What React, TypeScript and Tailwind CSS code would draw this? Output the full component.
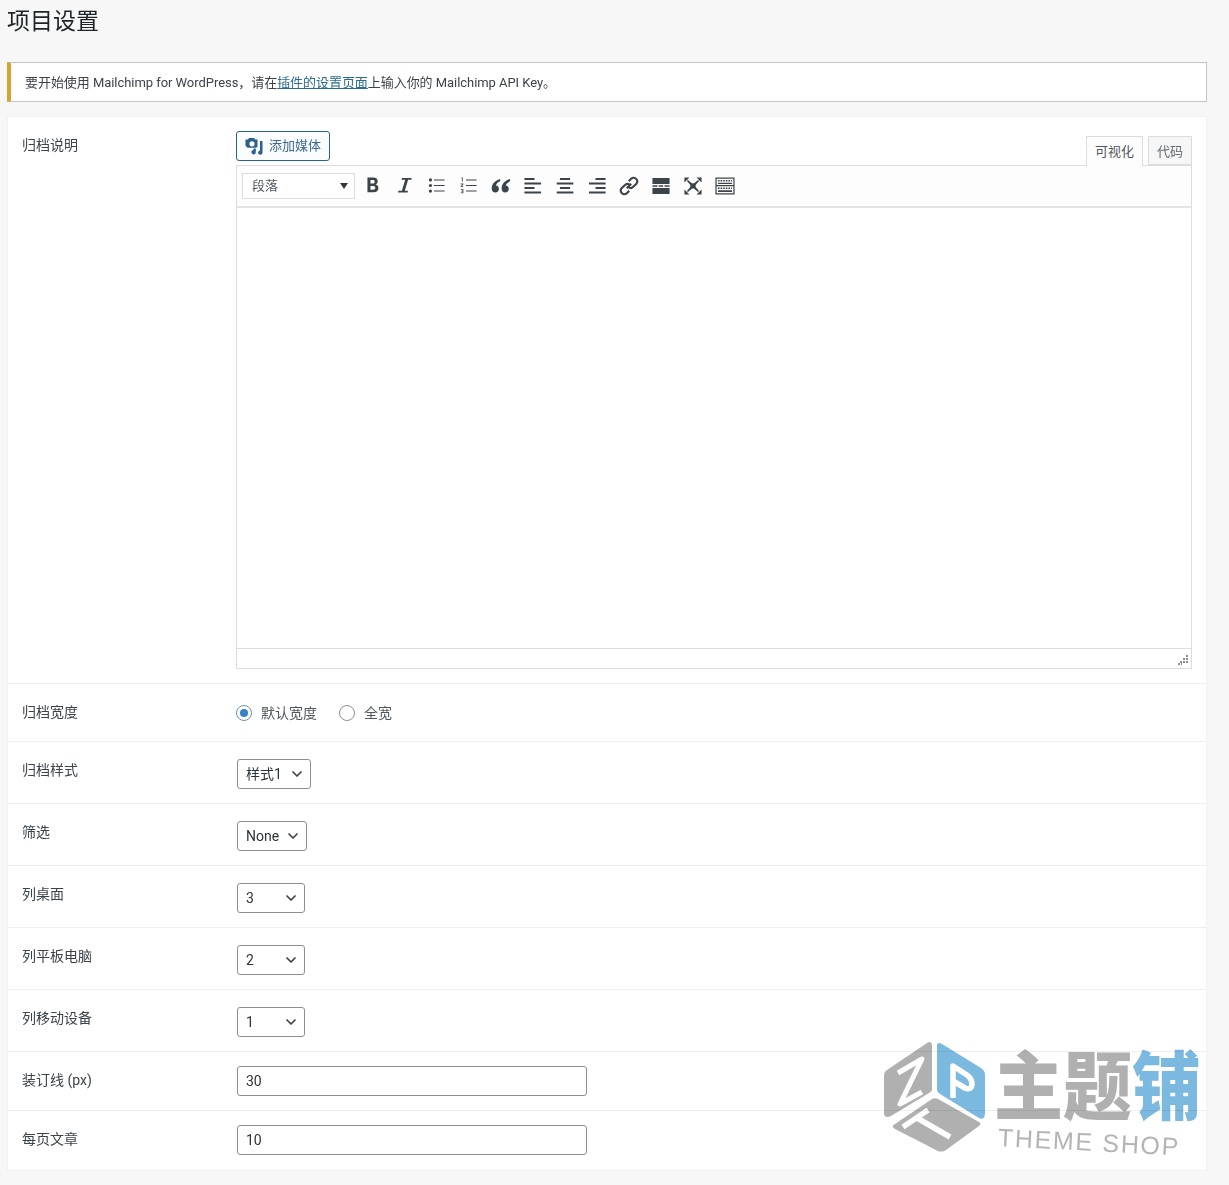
import { ChevronDown } from "lucide-react";
import type { ReactNode } from "react";

const toolbarIcons: ReactNode[] = [
  // bold
  <path key="b" fillRule="evenodd" d="M4.500 1.500h5.700c2.900 0 4.500 1.400 4.500 3.700 0 1.500-.8 2.700-2.100 3.200 1.800.4 2.800 1.800 2.800 3.500 0 2.700-1.900 4.300-5 4.300H4.500V1.500zm3 2.500v3.500h2.200c1.300 0 2-.6 2-1.800 0-1.100-.7-1.700-2-1.700H7.500zm0 6v3.700h2.500c1.500 0 2.300-.6 2.300-1.900 0-1.200-.9-1.800-2.400-1.800H7.500z" />,
  // italic
  <path key="i" d="M7 2h9.500v1.800h-3.400L9.800 14.700h3.200l-.5 1.800H3l.5-1.800h3.400L10.200 3.800H6.500z" />,
  // bullet list
  <g key="ul"><circle cx="3.500" cy="4" r="1.600" /><circle cx="3.500" cy="9.500" r="1.600" /><circle cx="3.500" cy="15" r="1.600" /><path d="M7 3.500h10.500v1H7zM7 9h10.500v1H7zM7 14.500h10.500v1H7z" /></g>,
  // numbered list
  <g key="ol"><path d="M7 3.500h10.500v1H7zM7 9h10.500v1H7zM7 14.500h10.500v1H7z" /><path d="M2.500 1.500h1.300v4H3V2.500h-.5zM1.800 7.500h2.600v.9L3 10h1.400v.8H1.800V10l1.500-1.700H1.800zM1.800 13h2.600v4.200H1.800v-.8h1.800v-.9H2.400v-.7h1.200v-1H1.800z" /></g>,
  // quote
  <path key="q" d="M9.200 3C5 4.200.8 7.300.8 12.400c0 2.600 1.500 4.100 3.600 4.100 2 0 3.500-1.500 3.500-3.500 0-1.900-1.200-3.200-3-3.400.4-1.700 2.100-3.300 4.300-4.200zm9.800 0c-4.200 1.200-8.400 4.300-8.400 9.400 0 2.600 1.500 4.100 3.600 4.100 2 0 3.500-1.500 3.500-3.500 0-1.900-1.200-3.200-3-3.400.4-1.700 2.100-3.300 4.300-4.200z" />,
  // align left
  <path key="al" d="M1.500 2h10v2h-10zM1.500 6.500h16.500v2H1.500zM1.500 11h10v2h-10zM1.500 15.500h16.500v2H1.500z" />,
  // align center
  <path key="ac" d="M5 2h10v2H5zM1.800 6.500h16.500v2H1.800zM5 11h10v2H5zM1.800 15.500h16.500v2H1.800z" />,
  // align right
  <path key="ar" d="M8.500 2h10v2h-10zM2 6.500h16.500v2H2zM8.500 11h10v2h-10zM2 15.500h16.500v2H2z" />,
  // link
  <g key="l" fill="none" stroke="currentColor" strokeWidth="2.100"><path d="M7.800 12.200l4.400-4.400" /><path d="M9.800 5.200l2.300-2.300c1.500-1.500 3.700-1.500 5 0s1.500 3.500 0 5l-2.900 2.900c-1.400 1.400-3.500 1.400-4.800.2" /><path d="M10.200 14.800l-2.300 2.300c-1.500 1.500-3.700 1.500-5 0s-1.500-3.500 0-5l2.900-2.900c1.400-1.400 3.500-1.400 4.800-.2" /></g>,
  // read more
  <path key="m" d="M1.500 2h17v6h-17zM1.500 9.300h5v1.400h-5zM7.800 9.300h4.400v1.400H7.800zM13.500 9.300h5v1.400h-5zM1.500 12h17v6h-17z" />,
  // fullscreen
  <g key="f"><path d="M1.500 1.500h5L1.500 6.500zM18.500 1.500v5l-5-5zM1.500 18.500v-5l5 5zM18.500 18.500h-5l5-5z" /><path d="M5 4l3.500 3c1 .6 2 .6 3 0L15 4l1 1-3 3.500c-.6 1-.6 2 0 3l3 3.500-1 1-3.500-3c-1-.6-2-.6-3 0L5 16l-1-1 3-3.500c.6-1 .6-2 0-3L4 5z" /></g>,
  // toolbar toggle
  <path key="k" fillRule="evenodd" d="M.5 1.500h19v17H.5zM1.700 2.700v6.300h16.600V2.700zM1.700 10.200v7.100h16.600v-7.100zM3 4h1.600v1.600H3zM5.600 4h1.600v1.600H5.600zM8.200 4h1.600v1.600H8.200zM10.800 4h1.600v1.600h-1.600zM13.400 4H15v1.600h-1.600zM16 4h1v1.600h-1zM3 6.700h14v1.200H3zM3 11.500h1.600v1.600H3zM5.600 11.500h1.600v1.600H5.600zM8.200 11.500h1.600v1.600H8.200zM10.800 11.500h1.600v1.600h-1.600zM13.400 11.500H15v1.600h-1.600zM16 11.500h1v1.600h-1zM3 14.200h14v1.800H3z" />,
];

function Row({ label, className, children }: { label: string; className: string; children: ReactNode }) {
  return (
    <div className={`flex border-b border-[#eeeeee] pl-[14px] ${className}`}>
      <div className="w-[215px] shrink-0 text-[14px] leading-[20px] text-[#3c434a]">{label}</div>
      <div className="min-w-0 grow">{children}</div>
    </div>
  );
}

function FakeSelect({ value, width }: { value: string; width: string }) {
  return (
    <div className={`-mt-px flex h-[30px] items-center justify-between rounded-[3px] border border-[#8c8f94] bg-white pl-2 pr-[5px] text-[14px] text-[#2c3338] ${width}`}>
      <span>{value}</span>
      <ChevronDown className="h-4 w-4 text-[#3c434a]" strokeWidth={2.6} />
    </div>
  );
}

function TextBox({ value }: { value: string }) {
  return (
    <input
      readOnly
      value={value}
      className="-mt-[4px] block h-[30px] w-[350px] rounded-[3px] border border-[#8c8f94] bg-white px-2 text-[14px] text-[#2c3338]"
    />
  );
}

function Radio({ label, checked }: { label: string; checked?: boolean }) {
  return (
    <div className="flex items-center gap-[9px]">
      <span className={`flex h-4 w-4 items-center justify-center rounded-full border ${checked ? "border-[#6f8fb0]" : "border-[#8c8f94]"}`}>
        {checked && <span className="h-2 w-2 rounded-full bg-[#3582c4]" />}
      </span>
      <span className="text-[14px] leading-[20px] text-[#50575e]">{label}</span>
    </div>
  );
}

function Watermark() {
  return (
    <div className="pointer-events-none absolute left-[880px] top-[1036px] h-[125px] w-[325px] mix-blend-multiply">
      <svg viewBox="0 0 110 120" className="absolute left-0 top-0 h-[120px] w-[110px]">
        <path d="M52 10v43c0 2-1 3-3 4L11 80c-4 2-7 1-7-3V40c0-3 1-5 3-6L47 7c3-2 5-1 5 3z" fill="#b0b0b0" />
        <path d="M57 10c0-3 2-4 5-2l39 24c3 2 4 4 4 7v38c0 5-2 7-6 5L60 58c-2-1-3-3-3-5z" fill="#7cb9e0" />
        <path d="M52 63c2-1 4-1 6 0l41 23c2 1 2 3 0 4L66 114c-3 2-7 2-10 0L15 93c-3-2-3-4 0-5z" fill="#b0b0b0" />
        <path d="M18 37L42 23 20 68 42 56" fill="none" stroke="#ffffff" strokeWidth="5" strokeLinejoin="round" />
        <path d="M73 62V30l14 9c4 3 5 6 5 9 0 4-3 6-7 4l-12-7" fill="none" stroke="#ffffff" strokeWidth="5.500" strokeLinejoin="round" />
        <path d="M23 91l25-17M37 82l33 19" fill="none" stroke="#ffffff" strokeWidth="5.500" />
      </svg>
      <div className="absolute left-[114px] top-[6px] flex h-[74px] origin-top scale-y-[1.08] font-['Noto_Sans_CJK_SC',sans-serif] text-[69px] font-black leading-[74px]">
        <span className="text-[#b0b0b0]">主题</span>
        <span className="text-[#7cb9e0]">铺</span>
      </div>
      <div className="absolute left-[118px] top-[88px] origin-left rotate-[3deg] whitespace-nowrap font-['Liberation_Sans',sans-serif] text-[25px] leading-[26px] tracking-[1.700px] text-[#b4b4b4]">
        THEME SHOP
      </div>
    </div>
  );
}

export default function App() {
  return (
    <div className="relative h-[1185px] overflow-hidden bg-[#f7f7f7] pl-[7px] pr-[22px] font-['Roboto','Noto_Sans_CJK_SC',sans-serif]">
      <h1 className="h-[62px] pt-[6px] text-[23px] leading-[32px] text-[#1d2327]">项目设置</h1>

      <div className="flex h-10 items-center border border-l-4 border-[#c3c4c7] border-l-[#d3a52b] bg-white pl-[14px] pt-px text-[13px] tracking-[-0.05px] text-[#3c434a]">
        <span>
          要开始使用 Mailchimp for WordPress，请在<a href="#" className="text-[#2a6a94] underline">插件的设置页面</a>上输入你的 Mailchimp API Key。
        </span>
      </div>

      <div className="mt-[14px] border border-[#f1f1f1] bg-white">
        <Row label="归档说明" className="h-[567px] pt-[18px]">
          <div className="-ml-px mt-[-4px] w-[956px]">
            <div className="flex h-[34px] items-start justify-between">
              <div className="flex h-[30px] w-[94px] items-center gap-[5px] rounded-[3px] border border-[#2a6390] bg-[#fafcfd] pl-[7px] text-[13px] text-[#3d6a92]">
                <svg viewBox="0 0 20 20" className="h-5 w-5 fill-[#2a5f8f]">
                  <path fillRule="evenodd" d="M1.500 3.500h2.500L5 2h5l1 1.500h2.500V11c-.6 0-1.200.3-1.700.8H3.500l-2-2zm6.500 1.700a2.600 2.600 0 100 5.200 2.600 2.600 0 000-5.200z" />
                  <path d="M16 5h2.500v11.500a2.200 2.200 0 11-2.500-2.100zM9.500 12.500h2.300V16a2.200 2.200 0 11-2.300-2z" />
                </svg>
                <span>添加媒体</span>
              </div>
              <div className="mt-[5px] flex gap-[5px] text-[13px] leading-[29px] text-[#50575e]">
                <div className="z-10 h-[30px] border border-b-0 border-[#dcdcde] bg-[#fdfdfd] px-2">可视化</div>
                <div className="h-[29px] border border-[#dcdcde] bg-[#f6f6f6] px-2 text-[#646970]">代码</div>
              </div>
            </div>

            <div className="border border-[#dcdcde] bg-white">
              <div className="flex h-[42px] items-center gap-[8px] border-b-2 border-[#e4e4e4] bg-[#fdfdfd] pl-[5px]">
                <div className="mr-[-2px] flex h-[26px] w-[113px] items-center justify-between border border-[#dcdcde] bg-white px-[9px] pr-[6px] text-[13px] text-[#50575e]">
                  <span>段落</span>
                  <span className="h-0 w-0 border-x-[4px] border-t-[6px] border-x-transparent border-t-[#32373c]" />
                </div>
                {toolbarIcons.map((icon, i) => (
                  <svg key={i} viewBox="0 0 20 20" className="h-6 w-6 scale-[0.84] fill-[#3c434a] text-[#3c434a]">
                    {icon}
                  </svg>
                ))}
              </div>
              <div className="h-[440px]" />
              <div className="flex h-[20px] items-end justify-end border-t border-[#dcdcde] pb-[3px] pr-[3px]">
                <svg viewBox="0 0 10 10" className="h-[10px] w-[10px] fill-[#8c8f94]">
                  <path d="M8 0h2v2H8zM5 3h2v2H5zM8 3h2v2H8zM2 6h2v2H2zM5 6h2v2H5zM8 6h2v2H8zM0 8h2v2H0zM3 8h1v2H3z" />
                </svg>
              </div>
            </div>
          </div>
        </Row>

        <Row label="归档宽度" className="h-[58px] pt-[18px]">
          <div className="-ml-px flex items-center gap-[22px] pt-[1px]">
            <Radio label="默认宽度" checked />
            <Radio label="全宽" />
          </div>
        </Row>
        <Row label="归档样式" className="h-[62px] pt-[18px]">
          <FakeSelect value="样式1" width="w-[74px]" />
        </Row>
        <Row label="筛选" className="h-[62px] pt-[18px]">
          <FakeSelect value="None" width="w-[70px]" />
        </Row>
        <Row label="列桌面" className="h-[62px] pt-[18px]">
          <FakeSelect value="3" width="w-[68px]" />
        </Row>
        <Row label="列平板电脑" className="h-[62px] pt-[18px]">
          <FakeSelect value="2" width="w-[68px]" />
        </Row>
        <Row label="列移动设备" className="h-[62px] pt-[18px]">
          <FakeSelect value="1" width="w-[68px]" />
        </Row>
        <Row label="装订线 (px)" className="h-[59px] pt-[18px]">
          <TextBox value="30" />
        </Row>
        <Row label="每页文章" className="h-[59px] border-b-0 pt-[18px]">
          <TextBox value="10" />
        </Row>
      </div>

      <Watermark />
    </div>
  );
}
